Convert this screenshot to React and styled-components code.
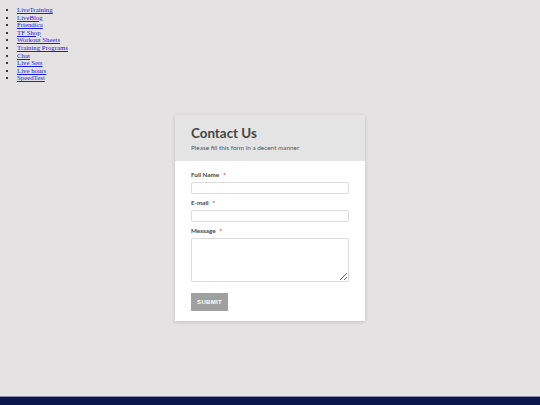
import styled, { createGlobalStyle } from "styled-components";

const GlobalStyle = createGlobalStyle`
  html, body {
    margin: 0;
    padding: 0;
    background: #e4e2e3;
  }
  #root {
    min-height: 405px;
    display: flex;
    flex-direction: column;
  }
`;

const NavList = styled.ul`
  margin: 6px 0 0;
  padding-left: 17px;
  font-family: "Liberation Serif", serif;
  font-size: 6.8px;
  line-height: 7.6px;

  a {
    color: #1a1ae6;
  }
`;

const Main = styled.main`
  flex: 1;
  display: flex;
  justify-content: center;
  padding-top: 33px;
`;

const Card = styled.div`
  width: 190px;
  height: 206px;
  background: #fff;
  box-shadow: 0 1px 4px rgba(0, 0, 0, 0.16);
  font-family: "Lato", "Liberation Sans", sans-serif;
`;

const Header = styled.div`
  background: #e4e4e4;
  height: 46px;
  box-sizing: border-box;
  padding: 10px 16px 0;
`;

const Title = styled.h1`
  margin: 0;
  font-size: 13.4px;
  font-weight: 700;
  color: #444;
  line-height: 17px;
`;

const Subtitle = styled.p`
  margin: 2px 0 0;
  font-size: 6.4px;
  color: #555;
`;

const Form = styled.form`
  padding: 10px 16px 0;
  display: flex;
  flex-direction: column;
`;

const Label = styled.label`
  font-size: 6.3px;
  font-weight: 700;
  color: #444;
  line-height: 8px;
  margin-bottom: 3px;

  span {
    color: #d33;
    margin-left: 4px;
  }
`;

const Input = styled.input`
  box-sizing: border-box;
  width: 158px;
  height: 12.5px;
  border: 1px solid #dcdcdc;
  border-radius: 2px;
  margin: 0 0 4.5px;
  padding: 0;
`;

const TextArea = styled.textarea`
  box-sizing: border-box;
  width: 158px;
  height: 44px;
  border: 1px solid #dcdcdc;
  border-radius: 2px;
  margin: 0;
  padding: 0;
`;

const Submit = styled.button`
  align-self: flex-start;
  margin-top: 11px;
  width: 37px;
  height: 18px;
  border: none;
  background: #a0a0a0;
  color: #fff;
  font-family: "Liberation Sans", sans-serif;
  font-size: 6px;
  font-weight: 700;
  letter-spacing: 0.3px;
  padding: 0;
`;

const Footer = styled.footer`
  height: 8px;
  background: #0a154b;
  border-top: 1px solid #8a90a8;
`;

const links = [
  "LiveTraining",
  "LiveBlog",
  "Friendica",
  "TF Shop",
  "Workout Sheets",
  "Training Programs",
  "Chat",
  "Live Sets",
  "Live hours",
  "SpeedTest",
];

export default function App() {
  return (
    <>
      <GlobalStyle />
      <NavList>
        {links.map((l) => (
          <li key={l}>
            <a href="#">{l}</a>
          </li>
        ))}
      </NavList>
      <Main>
        <Card>
          <Header>
            <Title>Contact Us</Title>
            <Subtitle>Please fill this form in a decent manner</Subtitle>
          </Header>
          <Form onSubmit={(e) => e.preventDefault()}>
            <Label>
              Full Name<span>*</span>
            </Label>
            <Input type="text" />
            <Label>
              E-mail<span>*</span>
            </Label>
            <Input type="email" />
            <Label>
              Message<span>*</span>
            </Label>
            <TextArea />
            <Submit type="submit">SUBMIT</Submit>
          </Form>
        </Card>
      </Main>
      <Footer />
    </>
  );
}
